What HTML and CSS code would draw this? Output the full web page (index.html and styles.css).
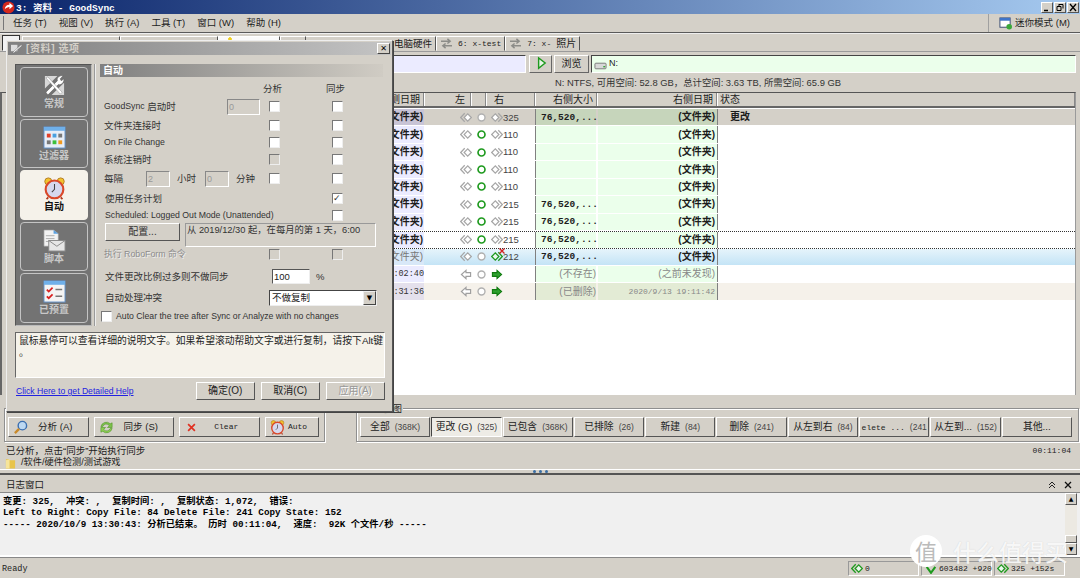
FILE: index.html
```html
<!DOCTYPE html>
<html lang="zh">
<head>
<meta charset="utf-8">
<title>GoodSync</title>
<link rel="stylesheet" href="styles.css">
</head>
<body>
<svg class="defs" width="0" height="0">
  <defs>
    <symbol id="dl" viewBox="0 0 14 12"><path d="M9 1.800 4.800 6 9 10.200 13.200 6z" fill="#fff" stroke="#a6a6a6" stroke-width="1.400"/><path d="M5.500 1 .8 6l4.700 5" fill="none" stroke="#a6a6a6" stroke-width="1.400"/></symbol>
    <symbol id="dr" viewBox="0 0 14 12"><path d="M5 1.800 .8 6 5 10.200 9.200 6z" fill="#fff" stroke="#a6a6a6" stroke-width="1.400"/><path d="M8.500 1l4.700 5-4.700 5" fill="none" stroke="#a6a6a6" stroke-width="1.400"/></symbol>
    <symbol id="dg" viewBox="0 0 14 12"><path d="M5 1.800 .8 6 5 10.200 9.200 6z" fill="#eaf8ee" stroke="#1e9a1e" stroke-width="1.500"/><path d="M8.500 1l4.700 5-4.700 5" fill="none" stroke="#1e9a1e" stroke-width="1.500"/></symbol>
    <symbol id="dgl" viewBox="0 0 14 12"><path d="M9 1.800 4.800 6 9 10.200 13.200 6z" fill="#eaf8ee" stroke="#1e9a1e" stroke-width="1.500"/><path d="M5.500 1 .8 6l4.700 5" fill="none" stroke="#1e9a1e" stroke-width="1.500"/></symbol>
    <symbol id="sl" viewBox="0 0 12 12"><path d="M6 1.500 1 6l5 4.500V8h5V4H6z" fill="#fff" stroke="#a0a0a0" stroke-width="1.300"/></symbol>
    <symbol id="sr" viewBox="0 0 12 12"><path d="M6 1.500 11 6l-5 4.500V8H1V4h5z" fill="#2ea02e" stroke="#0f7a0f" stroke-width="1.200"/></symbol>
    <symbol id="ok" viewBox="0 0 12 12"><circle cx="6" cy="6" r="3.800" fill="#fff" stroke="#1e9a1e" stroke-width="1.800"/></symbol>
    <symbol id="no" viewBox="0 0 12 12"><circle cx="6" cy="6" r="3.800" fill="#fff" stroke="#b0b0b0" stroke-width="1.500"/></symbol>
    <symbol id="sync" viewBox="0 0 14 12"><path d="M1 3.500h9M8 1l3 2.500L8 6M13 8.500H4M6 6 3 8.500 6 11" fill="none" stroke="#8c8c88" stroke-width="1.600"/></symbol>
    <symbol id="clock" viewBox="0 0 26 26"><circle cx="6" cy="5" r="4" fill="#f2c22e" stroke="#b0761a"/><circle cx="20" cy="5" r="4" fill="#f2c22e" stroke="#b0761a"/><path d="M6 23 4 25M20 23l2 2" stroke="#b03a20" stroke-width="2"/><circle cx="13" cy="14" r="10" fill="#d6d8ee" stroke="#d9482a" stroke-width="2.400"/><path d="M13 8v6l-3 3" fill="none" stroke="#444" stroke-width="1.200"/></symbol>
  </defs>
</svg>

<header class="titlebar">
  <svg class="app-logo" viewBox="0 0 14 14"><circle cx="7" cy="7" r="6.500" fill="#d5281c"/><path d="M3 9c0-3 2-5 5-5V2l4 3.500L8 9V6.500C6 6.500 4.500 7.500 3 9z" fill="#fff"/></svg>
  <span class="title-text">3: 资料 - GoodSync</span>
  <div class="win-btns">
    <span class="win-btn"><svg viewBox="0 0 10 9"><path d="M2 7.500h4" stroke="#000" stroke-width="1.500"/></svg></span>
    <span class="win-btn"><svg viewBox="0 0 10 9"><path d="M4 1.500h4v4M4 1v2M2 3.500h4v4H2z" fill="none" stroke="#000"/></svg></span>
    <span class="win-btn"><svg viewBox="0 0 10 9"><path d="M2 1l6 7M8 1 2 8" stroke="#000" stroke-width="1.300"/></svg></span>
  </div>
</header>

<nav class="menubar">
  <span class="grip"></span>
  <span class="menu-item">任务 (T)</span><span class="menu-item">视图 (V)</span><span class="menu-item">执行 (A)</span><span class="menu-item">工具 (T)</span><span class="menu-item">窗口 (W)</span><span class="menu-item">帮助 (H)</span>
  <span class="mini-mode">
    <svg class="mini-icon" viewBox="0 0 14 14"><rect x="1" y="1" width="11" height="10" fill="#fff" stroke="#33466e"/><rect x="1" y="1" width="11" height="3" fill="#3f74c8"/><circle cx="11" cy="10.500" r="3" fill="#3aa83a"/></svg>
    迷你模式 (M)
  </span>
</nav>

<div class="tabstrip">
  <span class="tab tab-first"></span>
  <span class="tab tab-hidden"></span><span class="tab tab-hidden"></span><span class="tab tab-hidden tab-white"></span><span class="tab tab-hidden tab-narrow"></span>
  <span class="tab tab-name">电脑硬件</span>
  <span class="tab"><svg class="tab-icon"><use href="#sync"/></svg><span class="mono">6: x-test</span></span>
  <span class="tab"><svg class="tab-icon"><use href="#sync"/></svg><span class="mono">7: x-</span>照片</span>
</div>

<div class="pathrow">
  <span class="path path-left"></span>
  <span class="go-btn"><svg viewBox="0 0 16 16" width="15" height="15"><path d="M6 2v11l7-5.500z" fill="#e8f6e8" stroke="#1e9a1e" stroke-width="1.500"/></svg></span>
  <span class="browse-btn">浏览</span>
  <span class="path path-right"><svg class="drive" viewBox="0 0 14 10"><rect x="1" y="2" width="12" height="6" rx="1" fill="#d8d8d8" stroke="#777"/><rect x="10" y="5" width="2" height="1.500" fill="#3aa83a"/></svg>N:</span>
</div>

<div class="inforow">N: NTFS, 可用空间: 52.8 GB，总计空间: 3.63 TB, 所需空间: 65.9 GB</div>

<section class="table">
  <div class="thead">
    <span class="th th-left">侧日期</span><span class="th th-l">左</span><span class="th th-m"></span><span class="th th-r">右</span><span class="th th-size">右侧大小</span><span class="th th-date">右侧日期</span><span class="th th-status">状态</span>
  </div>
  <div class="tbody">
    <div class="row row-head"><span class="c-left">(文件夹)</span><span class="c-sync"><svg class="ic"><use href="#dl"/></svg><svg class="ic2"><use href="#no"/></svg><svg class="ic"><use href="#dr"/></svg><span class="num">325</span></span><span class="c-size">76,520,...</span><span class="c-date">(文件夹)</span><span class="c-status">更改</span></div>
    <div class="row"><span class="c-left">(文件夹)</span><span class="c-sync"><svg class="ic"><use href="#dl"/></svg><svg class="ic2"><use href="#ok"/></svg><svg class="ic"><use href="#dr"/></svg><span class="num">110</span></span><span class="c-size"></span><span class="c-date">(文件夹)</span><span class="c-status"></span></div>
    <div class="row"><span class="c-left">(文件夹)</span><span class="c-sync"><svg class="ic"><use href="#dl"/></svg><svg class="ic2"><use href="#ok"/></svg><svg class="ic"><use href="#dr"/></svg><span class="num">110</span></span><span class="c-size"></span><span class="c-date">(文件夹)</span><span class="c-status"></span></div>
    <div class="row"><span class="c-left">(文件夹)</span><span class="c-sync"><svg class="ic"><use href="#dl"/></svg><svg class="ic2"><use href="#ok"/></svg><svg class="ic"><use href="#dr"/></svg><span class="num">110</span></span><span class="c-size"></span><span class="c-date">(文件夹)</span><span class="c-status"></span></div>
    <div class="row"><span class="c-left">(文件夹)</span><span class="c-sync"><svg class="ic"><use href="#dl"/></svg><svg class="ic2"><use href="#ok"/></svg><svg class="ic"><use href="#dr"/></svg><span class="num">110</span></span><span class="c-size"></span><span class="c-date">(文件夹)</span><span class="c-status"></span></div>
    <div class="row"><span class="c-left">(文件夹)</span><span class="c-sync"><svg class="ic"><use href="#dl"/></svg><svg class="ic2"><use href="#ok"/></svg><svg class="ic"><use href="#dr"/></svg><span class="num">215</span></span><span class="c-size">76,520,...</span><span class="c-date">(文件夹)</span><span class="c-status"></span></div>
    <div class="row"><span class="c-left">(文件夹)</span><span class="c-sync"><svg class="ic"><use href="#dl"/></svg><svg class="ic2"><use href="#ok"/></svg><svg class="ic"><use href="#dr"/></svg><span class="num">215</span></span><span class="c-size">76,520,...</span><span class="c-date">(文件夹)</span><span class="c-status"></span></div>
    <div class="row row-focus"><span class="c-left">(文件夹)</span><span class="c-sync"><svg class="ic"><use href="#dl"/></svg><svg class="ic2"><use href="#ok"/></svg><svg class="ic"><use href="#dr"/></svg><span class="num">215</span></span><span class="c-size">76,520,...</span><span class="c-date">(文件夹)</span><span class="c-status"></span></div>
    <div class="row row-sel"><span class="c-left">(文件夹)</span><span class="c-sync"><svg class="ic"><use href="#dl"/></svg><svg class="ic2"><use href="#no"/></svg><span class="ic-wrap"><svg class="ic"><use href="#dg"/></svg><svg class="x-mark" viewBox="0 0 6 6"><path d="M.5.5l5 5M5.500.5l-5 5" stroke="#d42020" stroke-width="1.300"/></svg></span><span class="num">212</span></span><span class="c-size">76,520,...</span><span class="c-date">(文件夹)</span><span class="c-status"></span></div>
    <div class="row row-plain"><span class="c-left mono-time">:02:40</span><span class="c-sync"><svg class="ic"><use href="#sl"/></svg><svg class="ic2"><use href="#no"/></svg><svg class="ic"><use href="#sr"/></svg><span class="num"></span></span><span class="c-size">(不存在)</span><span class="c-date">(之前未发现)</span><span class="c-status"></span></div>
    <div class="row row-plain row-del"><span class="c-left mono-time">:31:36</span><span class="c-sync"><svg class="ic"><use href="#sl"/></svg><svg class="ic2"><use href="#no"/></svg><svg class="ic"><use href="#sr"/></svg><span class="num"></span></span><span class="c-size">(已删除)</span><span class="c-date date-mono">2020/9/13 19:11:42</span><span class="c-status"></span></div>
  </div>
</section>

<section class="actions">
  <div class="group group-run">
    <span class="group-label">操作</span>
    <button class="btn btn-wide"><svg class="btn-ic" viewBox="0 0 16 16"><circle cx="10" cy="6" r="4.500" fill="#bcd8f2" stroke="#3b6fb0" stroke-width="1.500"/><path d="M6.500 9.500 2 14" stroke="#c98a2a" stroke-width="2.500"/></svg><span>分析 (A)</span></button>
    <button class="btn btn-wide"><svg class="btn-ic" viewBox="0 0 16 16"><path d="M2 7a6 6 0 0 1 10-3l2-1v5H9l2-2a4 4 0 0 0-7 1z" fill="#7cc24a" stroke="#4d8f24" stroke-width=".6"/><path d="M14 9a6 6 0 0 1-10 3l-2 1V8h5l-2 2a4 4 0 0 0 7-1z" fill="#8ccf52" stroke="#4d8f24" stroke-width=".6"/></svg><span>同步 (S)</span></button>
    <button class="btn btn-wide"><svg class="btn-ic btn-x" viewBox="0 0 8 8"><path d="M1 1l6 6M7 1 1 7" stroke="#e03020" stroke-width="1.500"/></svg><span class="mono">Clear</span></button>
    <button class="btn btn-auto"><svg class="btn-ic"><use href="#clock"/></svg><span class="mono">Auto</span></button>
  </div>
  <div class="group group-view">
    <span class="group-label">过滤视图</span>
    <button class="vbtn">全部 <small>(368K)</small></button>
    <button class="vbtn vbtn-on">更改 (G) <small>(325)</small></button>
    <button class="vbtn">已包含 <small>(368K)</small></button>
    <button class="vbtn">已排除 <small>(26)</small></button>
    <button class="vbtn">新建 <small>(84)</small></button>
    <button class="vbtn">删除 <small>(241)</small></button>
    <button class="vbtn">从左到右 <small>(84)</small></button>
    <button class="vbtn"><span class="mono-s">elete ...</span> <small>(241</small></button>
    <button class="vbtn">从左到... <small>(152)</small></button>
    <button class="vbtn">其他...</button>
  </div>
</section>

<div class="statusinfo">
  <div class="statusline"><span>已分析，点击“同步”开始执行同步</span><span class="elapsed">00:11:04</span></div>
  <div class="pathline"><svg class="folder" viewBox="0 0 12 12"><path d="M1 2h3l1 1h6v9H1z" fill="#e8c44a"/><path d="M1 3l4-1v10H1z" fill="#f6e49a"/></svg>/软件/硬件检测/测试游戏</div>
</div>

<div class="splitter"><span class="dot"></span><span class="dot"></span><span class="dot"></span></div>

<section class="log">
  <div class="log-head"><span>日志窗口</span><span class="log-tools"><svg class="log-up" viewBox="0 0 8 8"><path d="M1 4l3-3 3 3M1 7l3-3 3 3" fill="none" stroke="#222" stroke-width="1"/></svg><svg class="log-x" viewBox="0 0 8 8"><path d="M1 1l6 6M7 1 1 7" stroke="#111" stroke-width="1.300"/></svg></span></div>
  <div class="log-body">
    <div class="log-text">
      <p>变更: 325,  冲突: ,  复制时间: ,  复制状态: 1,072,  错误:</p>
      <p>Left to Right: Copy File: 84 Delete File: 241 Copy State: 152</p>
      <p>----- 2020/10/9 13:30:43: 分析已结束。 历时 00:11:04,  速度:  92K 个文件/秒 -----</p>
    </div>
    <div class="scrollbar"><span class="sb-btn">▲</span><span class="sb-track"></span><span class="sb-thumb"></span><span class="sb-btn">▼</span></div>
  </div>
</section>

<footer class="statusbar">
  <span class="ready">Ready</span>
  <span class="sb-panel"><svg class="sb-ic"><use href="#dgl"/></svg>0</span>
  <span class="sb-panel sb-panel-mid"><svg class="sb-ic" viewBox="0 0 14 12"><path d="M2 4l5 7 5-7" fill="none" stroke="#1e9a1e" stroke-width="2.400"/></svg>603482 +920</span>
  <span class="sb-panel"><svg class="sb-ic"><use href="#dg"/></svg>325 +152s</span>
</footer>

<div class="watermark"><span class="wm-badge">值</span><span class="wm-text">什么值得买</span></div>

<aside class="dialog">
  <div class="dlg-title">
    <svg class="dlg-ic" viewBox="0 0 14 12"><path d="M1 2h7v7H1z" fill="#ddd"/><path d="M3 10l9-8 1 1-9 8z" fill="#fff" stroke="#666" stroke-width=".5"/></svg>
    <span>[资料] 选项</span>
    <span class="dlg-close">✕</span>
  </div>
  <div class="dlg-main">
    <div class="side">
      <div class="side-item">
        <svg class="side-ic" viewBox="0 0 24 24"><path d="M2 2h13L2 15zM22 22H9l13-13z" fill="#d8d8d8"/><path d="M3 19 15 7c-1-3 2-6 6-5l-3 3 1 2 3-2c0 4-3 7-6 6L5 22z" fill="#fff" stroke="#666" stroke-width=".7"/><path d="M3 4l2-1 15 16-2 2z" fill="#fff" stroke="#888" stroke-width=".5"/></svg>
        <span>常规</span>
      </div>
      <div class="side-item">
        <svg class="side-ic" viewBox="0 0 24 24"><rect x="1" y="1" width="22" height="22" fill="#e8eef7" stroke="#5d8cc4"/><rect x="1" y="1" width="22" height="4" fill="#6fb0ea"/><rect x="4" y="8" width="4" height="4" fill="#e2402a"/><rect x="10" y="8" width="4" height="4" fill="#4aa0e0"/><rect x="16" y="8" width="4" height="4" fill="#777"/><rect x="4" y="15" width="4" height="4" fill="#777"/><rect x="10" y="15" width="4" height="4" fill="#3cc03c"/><rect x="16" y="15" width="4" height="4" fill="#f09a20"/></svg>
        <span>过滤器</span>
      </div>
      <div class="side-item side-on">
        <svg class="side-ic"><use href="#clock"/></svg>
        <span>自动</span>
      </div>
      <div class="side-item">
        <svg class="side-ic" viewBox="0 0 24 24"><path d="M1 1h10l5 4v13H1z" fill="#f2f2f2" stroke="#999" stroke-width=".7"/><path d="M11 1l5 4h-5z" fill="#5aa0e0"/><path d="M3 7h9M3 10h9M3 13h6" stroke="#aaa"/><rect x="6" y="12" width="17" height="11" fill="#e6e6e6" stroke="#888"/><path d="M6 12l8.500 6L23 12" fill="none" stroke="#888"/></svg>
        <span>脚本</span>
      </div>
      <div class="side-item">
        <svg class="side-ic" viewBox="0 0 24 24"><rect x="1" y="1" width="22" height="22" fill="#f4f4f4" stroke="#5d8cc4"/><rect x="1" y="1" width="22" height="4" fill="#6fb0ea"/><path d="M4 10l2 2 4-4M4 17l2 2 4-4" fill="none" stroke="#d82020" stroke-width="1.800"/><path d="M13 10h7M13 17h7" stroke="#777" stroke-width="1.500"/></svg>
        <span>已预置</span>
      </div>
    </div>
    <div class="opts">
      <h2 class="opts-head">自动</h2>
      <div class="opt opt-h"><span></span><span class="col-h">分析</span><span class="col-h">同步</span></div>
      <div class="opt opt-1"><span class="lbl-input"><span class="latin">GoodSync</span>&nbsp;启动时<span class="num-in num-wide">0</span></span><span class="cb"></span><span class="cb"></span></div>
      <div class="opt opt-2"><span>文件夹连接时</span><span class="cb"></span><span class="cb"></span></div>
      <div class="opt opt-3"><span class="latin">On File Change</span><span class="cb"></span><span class="cb"></span></div>
      <div class="opt opt-4"><span>系统注销时</span><span class="cb cb-dis"></span><span class="cb"></span></div>
      <div class="opt opt-5"><span class="every"><span class="every-1">每隔</span><span class="num-in">2</span><span class="every-2">小时</span><span class="num-in">0</span><span class="every-3">分钟</span></span><span class="cb"></span><span class="cb"></span></div>
      <div class="opt opt-6"><span>使用任务计划</span><span></span><span class="cb cb-on">✓</span></div>
      <div class="opt opt-7"><span class="latin">Scheduled: Logged Out Mode (Unattended)</span><span></span><span class="cb"></span></div>
      <div class="sched"><span class="cfg-btn">配置...</span><span class="sched-text">从 2019/12/30 起，在每月的第 1 天，6:00</span></div>
      <div class="opt opt-8"><span class="dis latin">执行 RoboForm 命令</span><span class="cb cb-dis"></span><span class="cb cb-dis"></span></div>
      <div class="pct"><span class="pct-label">文件更改比例过多则不做同步</span><span class="pct-in">100</span><span>%</span></div>
      <div class="conflict"><span class="pct-label">自动处理冲突</span><span class="select"><span>不做复制</span><span class="sel-arrow">▼</span></span></div>
      <div class="autoclear"><span class="cb"></span><span class="latin">Auto Clear the tree after Sync or Analyze with no changes</span></div>
    </div>
  </div>
  <div class="help">鼠标悬停可以查看详细的说明文字。如果希望滚动帮助文字或进行复制，请按下Alt键<br>。</div>
  <div class="dlg-foot">
    <span class="link">Click Here to get Detailed Help</span>
    <span class="dlg-btn">确定(O)</span><span class="dlg-btn">取消(C)</span><span class="dlg-btn dlg-btn-dis">应用(A)</span>
  </div>
</aside>
</body>
</html>
```

FILE: styles.css
```css
* { box-sizing: border-box; }
html, body { margin: 0; padding: 0; }
body {
  width: 1080px; height: 578px; overflow: hidden; position: relative;
  display: flex; flex-direction: column;
  background: #d4d0c8; color: #1c1c1c;
  font: 10px/1.2 "Liberation Sans", "Noto Sans CJK SC", sans-serif;
}
.defs { position: absolute; }
.mono { font-family: "Liberation Mono", "Noto Sans CJK SC", monospace; }
.latin { font-size: 8.700px; }
p { margin: 0; }

/* title */
.titlebar {
  height: 14px; flex: none; display: flex; align-items: center; padding-left: 2px;
  background: linear-gradient(90deg, #0a246a, #a6caf0); color: #fff;
  font: bold 9.500px "Liberation Mono", "Noto Sans CJK SC", monospace;
}
.app-logo { width: 13px; height: 13px; margin-right: 1px; }
.title-text { white-space: pre; }
.win-btns { margin-left: auto; display: flex; gap: 1px; padding-right: 1px; }
.win-btn {
  width: 12px; height: 11px; background: #d4d0c8; display: flex;
  border: 1px solid; border-color: #fff #555 #555 #fff;
}
.win-btn svg { width: 10px; height: 9px; }

/* menu */
.menubar {
  height: 19px; flex: none; display: flex; align-items: center; gap: 12px;
  padding-left: 3px; font-size: 9.500px; border-bottom: 1px solid #5a5a5a;
}
.grip { width: 1px; height: 14px; background: #777; margin-right: -3px; }
.menu-item { white-space: pre; }
.mini-mode {
  margin-left: auto; display: flex; align-items: center; gap: 3px; height: 100%;
  padding: 0 10px 0 10px; border-left: 1px solid #a0a0a0;
}
.mini-icon { width: 13px; height: 13px; }

/* tabs */
.tabstrip {
  height: 18px; flex: none; display: flex; align-items: flex-end; padding-left: 2px;
  font-size: 10px; border-top: 1px solid #eee;
}
.tab {
  height: 15px; display: flex; align-items: center; gap: 5px; padding: 0 3px;
  border: 1px solid; border-color: #fff #555 transparent #fff; white-space: pre; font-size: 10px;
}
.tab-first { width: 18px; height: 16px; margin-right: 2px; background: #f2f2f2; border-color: #333 #333 transparent #333; }
.tab-hidden { width: 98px; }
.tab-white { width: 62px; background: radial-gradient(circle at 11px 2px, #f0d020 1.500px, #fafafa 2px); }
.tab-narrow { width: 26px; }
.tab-name { padding: 0 0 0 88px; width: 130px; flex: none; border-left: 0; font-size: 9.500px; }
.tab-icon { width: 13px; height: 11px; }
.tab .mono { font-size: 8px; }

/* path row */
.pathrow {
  height: 21px; flex: none; display: flex; align-items: center; gap: 2px;
  padding: 3px 4px 0 6px; border-top: 1px solid #9a9a9a;
}
.path {
  height: 18px; display: flex; align-items: center; border: 1px solid; border-color: #444 #fff #fff #444;
  font-size: 9px;
}
.path-left { width: 520px; background: #ebebff; margin-right: 1px; }
.path-right { flex: 1; background: #ebffeb; padding-left: 2px; gap: 2px; }
.drive { width: 13px; height: 10px; margin-top: 5px; }
.go-btn, .browse-btn {
  height: 18px; display: flex; align-items: center; justify-content: center;
  border: 1px solid; border-color: #fff #666 #666 #fff;
}
.go-btn { width: 23px; }
.browse-btn { width: 35px; }
.inforow { height: 20px; flex: none; padding-left: 555px; line-height: 22px; font-size: 9.400px; color: #333; white-space: pre; }

/* table */
.table {
  height: 303px; flex: none; width: 1076px;
  border-top: 1px solid #555; border-right: 1px solid #9a9a9a; border-left: 2px solid #666;
  padding-left: 4px; background: linear-gradient(90deg, #d4d0c8 4px, #fff 4px);
}
.thead {
  height: 15px; display: grid; grid-template-columns: 418px 47px 15px 49px 62px 120px 1fr;
  background: #d4d0c8; border-bottom: 2px solid #666; font-size: 10px;
}
.th { border-right: 1px solid #888; box-shadow: inset 1px 0 #fff; text-align: right; padding-right: 3px; line-height: 13px; white-space: nowrap; }
.th-l { padding-right: 5px; }
.th-r { text-align: left; padding-left: 8px; }
.th-status { text-align: left; padding-left: 3px; }
.tbody { display: grid; grid-auto-rows: 17.450px; padding-top: 1px; font-weight: bold; font-size: 10px; }
.row { display: grid; grid-template-columns: 418px 112px 62px 120px 1fr; align-items: stretch; white-space: nowrap; border-bottom: 1px solid #fff; }
.row > span { display: flex; align-items: center; }
.c-left { justify-content: flex-end; background: #ebebff; padding-right: 1px; overflow: hidden; }
.c-sync { padding-left: 35px; gap: 2px; background: #fff; font-weight: normal; font-size: 9.500px; color: #444; margin-left: 1px; border-right: 1px solid #808080; }
.c-size { background: #ebffeb; padding-left: 5px; font-family: "Liberation Mono", monospace; margin-right: 2px; font-size: 9.500px; }
.c-date { justify-content: flex-end; background: #ebffeb; padding-right: 2px; border-right: 1px solid #808080; }
.c-status { padding-left: 12px; }
.ic { width: 12px; height: 11px; }
.ic2 { width: 11px; height: 11px; margin: 0 2px; }
.ic-wrap { position: relative; width: 12px; height: 11px; display: flex; }
.x-mark { position: absolute; top: -3px; right: -2px; width: 6px; height: 6px; }
.num { margin-left: -2px; }

.row-head { background: #d4d0c8; }
.row-head .c-left { background: #c8c4d6; }
.row-head .c-sync { background: #d4d0c8; }
.row-head .c-size, .row-head .c-date { background: #c6d5bb; }
.row-focus { border-top: 1px dotted #333; border-bottom: 1px dotted #333; }
.row-sel { background: linear-gradient(#e6f4fb, #c4e4f6); }
.row-sel .c-left { background: #d8e8f8; color: #777; font-weight: normal; }
.row-sel .c-sync, .row-sel .c-size, .row-sel .c-date { background: transparent; }
.row-plain { font-weight: normal; color: #888; }
.row-plain .c-left { font-family: "Liberation Mono", monospace; color: #333; font-size: 8.500px; padding-right: 0; }
.row-plain .c-size { justify-content: flex-end; padding-right: 0; font-family: inherit; font-size: 10px; }
.row-del { background: #f5f1ea; }
.row-del .c-left { background: #e4e0ec; }
.row-del .c-sync { background: #f5f1ea; }
.row-del .c-size, .row-del .c-date { background: #e3ebd5; }
.row-plain .date-mono { font-family: "Liberation Mono", monospace; font-size: 8px; }

/* actions */
.actions { flex: none; height: 49px; padding-top: 13px; display: flex; }
.group {
  position: relative; height: 34px; padding: 8px 3px 0 3px; display: flex; gap: 5px;
  border: 1px solid #8f8f8f; box-shadow: inset 1px 1px #fff, 1px 1px #fff;
}
.group-run { margin-left: 4px; width: 321px; }
.group-view { margin-left: 31px; width: 723px; gap: 1px; padding-left: 3px; }
.group-label { position: absolute; left: 6px; top: -6px; padding: 0 1px; background: #d4d0c8; font-size: 9.500px; line-height: 11px; }
.btn, .vbtn {
  height: 20px; padding: 0; font: 9.500px/1 "Liberation Sans", "Noto Sans CJK SC", sans-serif; color: #222;
  background: #d4d0c8; border: 1px solid; border-color: #fff #555 #555 #fff; white-space: nowrap;
  display: flex; align-items: center; justify-content: center;
}
.vbtn { font-size: 9.800px; }
.btn { position: relative; }
.btn-wide { width: 80.500px; padding-left: 14px; }
.btn-auto { width: 54px; padding-left: 12px; }
.btn .mono { font-size: 8px; }
.btn-ic { position: absolute; left: 4px; top: 2px; width: 15px; height: 15px; }
.btn-x { left: 7px; top: 5px; width: 9px; height: 9px; }
.vbtn { width: 70.300px; gap: 5px; overflow: hidden; }
.vbtn small { font-size: 8.500px; color: #444; }
.mono-s { font: 8px "Liberation Mono", monospace; }
.vbtn-on { background: #eeece6; border-color: #444 #fff #fff #444; }

/* status lines */
.statusinfo { height: 25px; flex: none; padding: 0 9px 0 6px; font-size: 9.500px; }
.statusline { display: flex; justify-content: space-between; line-height: 13px; height: 13px; }
.elapsed { font: 8px/13px "Liberation Mono", monospace; }
.pathline { display: flex; align-items: center; font-size: 9.200px; gap: 5px; margin-left: -1px; }
.folder { width: 11px; height: 12px; }

/* splitter */
.splitter { height: 6px; flex: none; border-top: 1px solid #fff; border-bottom: 2px solid #555; display: flex; justify-content: center; gap: 3px; }
.dot { width: 3px; height: 3px; border-radius: 50%; background: #3a6ea5; }

/* log */
.log { height: 80px; flex: none; display: flex; flex-direction: column; }
.log-head { height: 18px; flex: none; display: flex; justify-content: space-between; align-items: center; padding: 2px 8px 0 6px; border-bottom: 1px solid #888; font-size: 9.500px; }
.log-tools { display: flex; gap: 8px; }
.log-up, .log-x { width: 8px; height: 8px; }
.log-body { flex: 1; display: flex; background: #f0f0f0; min-height: 0; overflow: hidden; }
.log-text { flex: 1; padding: 2.500px 3px; font: bold 9.250px/11.700px "Liberation Mono", "Noto Sans CJK SC", monospace; color: #000; }
.log-text p { white-space: pre; }
.scrollbar { width: 12px; margin-right: 3px; display: flex; flex-direction: column; background: #ece9e2; }
.sb-btn { height: 12px; flex: none; background: #d4d0c8; border: 1px solid; border-color: #fff #555 #555 #fff; font: 6px/10px "DejaVu Sans", sans-serif; text-align: center; color: #000; }
.sb-track { flex: 1; }
.sb-thumb { height: 8px; flex: none; background: #d4d0c8; border: 1px solid; border-color: #fff #555 #555 #fff; }

/* status bar */
.statusbar { flex: 1; display: flex; align-items: center; gap: 2px; padding: 2px 15px 0 0; border-top: 2px solid #fff; box-shadow: inset 0 1px #888; font: 8px "Liberation Mono", monospace; color: #222; }
.ready { flex: 1; padding-left: 2px; font-size: 8.500px; }
.sb-panel { width: 71px; height: 15px; display: flex; align-items: center; gap: 2px; padding-left: 2px; border: 1px solid; border-color: #999 #fff #fff #999; white-space: nowrap; }
.sb-panel-mid { padding-left: 3px; }
.sb-ic { width: 12px; height: 11px; flex: none; }

/* watermark */
.watermark { position: absolute; left: 910px; top: 535px; display: flex; align-items: center; gap: 11px; color: rgba(255,255,255,.85); }
.wm-badge { width: 32px; height: 32px; border-radius: 50%; background: #fff; color: #bbb; font: 22px/31px "Noto Sans CJK SC", sans-serif; text-align: center; }
.wm-text { font: 500 23px/1 "Noto Sans CJK SC", sans-serif; text-shadow: 0 0 1px rgba(150,150,150,.4); }

/* dialog */
.dialog {
  position: absolute; left: 6px; top: 40px; width: 387px; height: 372px;
  background: #d4d0c8; border: 1px solid; border-color: #eee #555 #555 #eee;
  box-shadow: 1px 1px 0 #444; padding: 1px 1px 0 1px; display: flex; flex-direction: column;
}
.dlg-title {
  height: 13px; flex: none; display: flex; align-items: center; gap: 3px; padding-left: 2px;
  background: linear-gradient(90deg, #808080, #c4c4c4); color: #d4d0c8; font-size: 10px; font-weight: bold; letter-spacing: .6px;
}
.dlg-ic { width: 13px; height: 11px; }
.dlg-close { margin-left: auto; margin-right: 1px; width: 13px; height: 11px; background: #d4d0c8; color: #000; font: 8px/9px "DejaVu Sans", sans-serif; letter-spacing: 0; text-align: center; border: 1px solid; border-color: #fff #444 #444 #fff; }
.dlg-main { flex: none; height: 273px; display: flex; padding: 9px 0 0 7px; }
.side { width: 77px; height: 262px; flex: none; background: #737373; border: 1px solid; border-color: #555 #bbb #bbb #555; padding: 2px 3px 0 4px; display: flex; flex-direction: column; gap: 2px; }
.side-item { height: 49.500px; flex: none; border: 1px solid #c4c4c4; border-radius: 4px; display: flex; flex-direction: column; align-items: center; padding-top: 6px; gap: 1px; color: #c8c8c8; font-weight: bold; font-size: 10px; line-height: 12px; }
.side-ic { width: 23px; height: 23px; flex: none; }
.side-on { background: #f5f2ea; color: #111; border-color: #f5f2ea; }
.opts { flex: 1; margin-left: 2px; padding: 0 8px 0 4px; border-left: 2px groove #eee; height: 262px; font-size: 9.500px; color: #333; }
.opts-head { margin: 0; height: 13px; background: linear-gradient(90deg, #808080, #d0ccc4); color: #fff; font-size: 10px; line-height: 13px; padding-left: 3px; }
.opt { display: grid; grid-template-columns: 165px 63px 20px; align-items: center; padding-left: 4px; white-space: nowrap; }
.opt-h { height: 21px; padding-top: 3px; }
.col-h { margin-left: -6px; }
.opt-1 { height: 17px; }
.opt-2 { height: 19px; padding-top: 2px; }
.opt-3 { height: 16px; }
.opt-4 { height: 19px; }
.opt-5 { height: 19px; }
.opt-6 { height: 21px; padding-left: 5px; }
.opt-6 .cb, .opt-7 .cb { margin-left: -1px; }
.opt-7 { height: 12px; padding-left: 5px; }
.opt-8 { height: 12px; margin-top: 2px; }
.opt-8 .latin { font-size: 8.800px; }
.lbl-input, .every { display: flex; align-items: center; }
.num-in { width: 24px; height: 16px; flex: none; background: #d4d0c8; border: 1px solid; border-color: #888 #fff #fff #888; color: #999; font: 9px/14px "Liberation Sans", sans-serif; padding-left: 1px; }
.lbl-input .num-wide { width: 33px; margin-left: auto; margin-right: 9px; }
.every-1 { width: 42px; }
.every-2 { width: 35px; padding-left: 7px; }
.every-3 { padding-left: 7px; }
.cb { width: 11px; height: 11px; background: #fff; border: 1px solid; border-color: #777 #eee #eee #777; display: block; font: bold 9px/9px "DejaVu Sans", sans-serif; color: #333; }
.cb-dis { background: #d4d0c8; }
.dis { color: #8c8c8c; text-shadow: 1px 1px 0 #eee; }
.sched { display: flex; height: 23px; gap: 5px; margin: 2px 0 0 5px; }
.cfg-btn { width: 75px; height: 18px; background: #d4d0c8; border: 1px solid; border-color: #fff #555 #555 #fff; text-align: center; line-height: 16px; font-size: 10px; }
.sched-text { width: 191px; height: 24px; border: 1px solid; border-color: #999 #fff #fff #999; padding-left: 1px; line-height: 12px; font-size: 9.300px; white-space: nowrap; }
.pct { display: flex; align-items: center; height: 17px; padding-left: 1px; margin-top: 8px; margin-left: 4px; }
.pct-label { width: 167px; flex: none; }
.pct-in { width: 38px; height: 15px; background: #fff; border: 1px solid; border-color: #555 #eee #eee #555; margin-right: 6px; font: 9.500px/13px "Liberation Sans", sans-serif; padding-left: 1px; color: #222; }
.conflict { display: flex; align-items: center; height: 17px; margin: 4px 0 0 5px; }
.select { width: 108px; height: 16px; margin-left: -3px; background: #fff; border: 1px solid; border-color: #444 #eee #eee #444; display: flex; justify-content: space-between; padding-left: 2px; align-items: center; color: #222; }
.sel-arrow { width: 13px; height: 14px; background: #d4d0c8; border: 1px solid; border-color: #eee #444 #444 #eee; font: 7px/12px "DejaVu Sans", sans-serif; text-align: center; color: #000; }
.autoclear { display: flex; align-items: center; gap: 4px; height: 12px; margin: 4px 0 0 1px; white-space: nowrap; }
.help { flex: none; height: 46px; margin: 4px 6px 0 7px; background: #f5f2ea; border: 1px solid; border-color: #666 #fff #fff #666; padding: 2px 3px; font-size: 9.800px; line-height: 12px; color: #222; white-space: nowrap; }
.dlg-foot { flex: 1; display: flex; align-items: flex-start; gap: 5.500px; padding: 4px 6px 0 8px; }
.link { margin-right: auto; color: #2222e0; text-decoration: underline; font-size: 8.600px; margin-top: 4px; }
.dlg-btn { width: 59.500px; height: 18px; background: #d4d0c8; border: 1px solid; border-color: #fff #555 #555 #fff; text-align: center; line-height: 16px; font-size: 10px; color: #222; }
.dlg-btn-dis { color: #999; text-shadow: 1px 1px 0 #fff; }
```
